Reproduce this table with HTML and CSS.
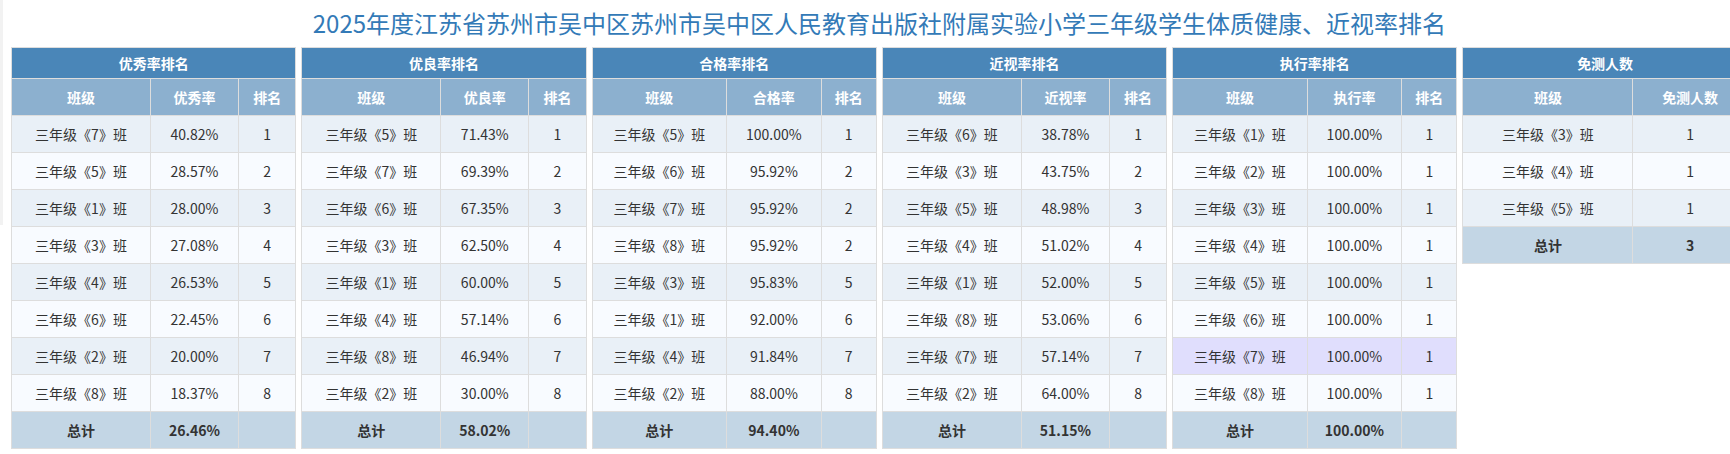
FILE: index.html
```html
<!DOCTYPE html>
<html lang="zh-CN">
<head>
<meta charset="utf-8">
<title>体质健康、近视率排名</title>
<link rel="stylesheet" href="styles.css">
</head>
<body>
<div class="edge"></div>
<div class="page">
  <h1 class="title">2025年度江苏省苏州市吴中区苏州市吴中区人民教育出版社附属实验小学三年级学生体质健康、近视率排名</h1>
  <div class="boards">
    <table class="rank">
      <colgroup><col class="a1"><col class="a2"><col></colgroup>
      <thead>
        <tr class="cap"><th colspan="3">优秀率排名</th></tr>
        <tr class="heads"><th>班级</th><th>优秀率</th><th>排名</th></tr>
      </thead>
      <tbody>
        <tr><td>三年级《7》班</td><td>40.82%</td><td>1</td></tr>
        <tr><td>三年级《5》班</td><td>28.57%</td><td>2</td></tr>
        <tr><td>三年级《1》班</td><td>28.00%</td><td>3</td></tr>
        <tr><td>三年级《3》班</td><td>27.08%</td><td>4</td></tr>
        <tr><td>三年级《4》班</td><td>26.53%</td><td>5</td></tr>
        <tr><td>三年级《6》班</td><td>22.45%</td><td>6</td></tr>
        <tr><td>三年级《2》班</td><td>20.00%</td><td>7</td></tr>
        <tr><td>三年级《8》班</td><td>18.37%</td><td>8</td></tr>
        <tr class="total"><td>总计</td><td>26.46%</td><td></td></tr>
      </tbody>
    </table>
    <table class="rank">
      <colgroup><col class="a1"><col class="a2"><col></colgroup>
      <thead>
        <tr class="cap"><th colspan="3">优良率排名</th></tr>
        <tr class="heads"><th>班级</th><th>优良率</th><th>排名</th></tr>
      </thead>
      <tbody>
        <tr><td>三年级《5》班</td><td>71.43%</td><td>1</td></tr>
        <tr><td>三年级《7》班</td><td>69.39%</td><td>2</td></tr>
        <tr><td>三年级《6》班</td><td>67.35%</td><td>3</td></tr>
        <tr><td>三年级《3》班</td><td>62.50%</td><td>4</td></tr>
        <tr><td>三年级《1》班</td><td>60.00%</td><td>5</td></tr>
        <tr><td>三年级《4》班</td><td>57.14%</td><td>6</td></tr>
        <tr><td>三年级《8》班</td><td>46.94%</td><td>7</td></tr>
        <tr><td>三年级《2》班</td><td>30.00%</td><td>8</td></tr>
        <tr class="total"><td>总计</td><td>58.02%</td><td></td></tr>
      </tbody>
    </table>
    <table class="rank">
      <colgroup><col class="b1"><col class="b2"><col></colgroup>
      <thead>
        <tr class="cap"><th colspan="3">合格率排名</th></tr>
        <tr class="heads"><th>班级</th><th>合格率</th><th>排名</th></tr>
      </thead>
      <tbody>
        <tr><td>三年级《5》班</td><td>100.00%</td><td>1</td></tr>
        <tr><td>三年级《6》班</td><td>95.92%</td><td>2</td></tr>
        <tr><td>三年级《7》班</td><td>95.92%</td><td>2</td></tr>
        <tr><td>三年级《8》班</td><td>95.92%</td><td>2</td></tr>
        <tr><td>三年级《3》班</td><td>95.83%</td><td>5</td></tr>
        <tr><td>三年级《1》班</td><td>92.00%</td><td>6</td></tr>
        <tr><td>三年级《4》班</td><td>91.84%</td><td>7</td></tr>
        <tr><td>三年级《2》班</td><td>88.00%</td><td>8</td></tr>
        <tr class="total"><td>总计</td><td>94.40%</td><td></td></tr>
      </tbody>
    </table>
    <table class="rank">
      <colgroup><col class="a1"><col class="a2"><col></colgroup>
      <thead>
        <tr class="cap"><th colspan="3">近视率排名</th></tr>
        <tr class="heads"><th>班级</th><th>近视率</th><th>排名</th></tr>
      </thead>
      <tbody>
        <tr><td>三年级《6》班</td><td>38.78%</td><td>1</td></tr>
        <tr><td>三年级《3》班</td><td>43.75%</td><td>2</td></tr>
        <tr><td>三年级《5》班</td><td>48.98%</td><td>3</td></tr>
        <tr><td>三年级《4》班</td><td>51.02%</td><td>4</td></tr>
        <tr><td>三年级《1》班</td><td>52.00%</td><td>5</td></tr>
        <tr><td>三年级《8》班</td><td>53.06%</td><td>6</td></tr>
        <tr><td>三年级《7》班</td><td>57.14%</td><td>7</td></tr>
        <tr><td>三年级《2》班</td><td>64.00%</td><td>8</td></tr>
        <tr class="total"><td>总计</td><td>51.15%</td><td></td></tr>
      </tbody>
    </table>
    <table class="rank">
      <colgroup><col class="b1"><col class="b2"><col></colgroup>
      <thead>
        <tr class="cap"><th colspan="3">执行率排名</th></tr>
        <tr class="heads"><th>班级</th><th>执行率</th><th>排名</th></tr>
      </thead>
      <tbody>
        <tr><td>三年级《1》班</td><td>100.00%</td><td>1</td></tr>
        <tr><td>三年级《2》班</td><td>100.00%</td><td>1</td></tr>
        <tr><td>三年级《3》班</td><td>100.00%</td><td>1</td></tr>
        <tr><td>三年级《4》班</td><td>100.00%</td><td>1</td></tr>
        <tr><td>三年级《5》班</td><td>100.00%</td><td>1</td></tr>
        <tr><td>三年级《6》班</td><td>100.00%</td><td>1</td></tr>
        <tr class="picked"><td>三年级《7》班</td><td>100.00%</td><td>1</td></tr>
        <tr><td>三年级《8》班</td><td>100.00%</td><td>1</td></tr>
        <tr class="total"><td>总计</td><td>100.00%</td><td></td></tr>
      </tbody>
    </table>
    <table class="rank">
      <colgroup><col class="c1"><col></colgroup>
      <thead>
        <tr class="cap"><th colspan="2">免测人数</th></tr>
        <tr class="heads"><th>班级</th><th>免测人数</th></tr>
      </thead>
      <tbody>
        <tr><td>三年级《3》班</td><td>1</td></tr>
        <tr><td>三年级《4》班</td><td>1</td></tr>
        <tr><td>三年级《5》班</td><td>1</td></tr>
        <tr class="total"><td>总计</td><td>3</td></tr>
      </tbody>
    </table>
  </div>
</div>
</body>
</html>
```

FILE: styles.css
```css
html {
  overflow: hidden;
}

body {
  margin: 0;
  background: #fff;
  font-family: "Microsoft YaHei", "Noto Sans CJK SC", sans-serif;
  color: #333;
}

.edge {
  position: absolute;
  left: 0;
  top: 0;
  width: 3px;
  height: 225px;
  background: #f2f2f2;
}

.page {
  width: max-content;
  padding-left: 11px;
}

.title {
  margin: 0 0 12px;
  padding-top: 11px;
  height: 24px;
  line-height: 24px;
  font-size: 24px;
  font-weight: normal;
  color: #337ab7;
  text-align: center;
}

.boards {
  display: flex;
  gap: 5px;
  align-items: flex-start;
}

.rank {
  flex: none;
  width: 285.3px;
  border-collapse: collapse;
  table-layout: fixed;
  border: 1px solid #ddd;
  font-size: 14px;
}

.rank th,
.rank td {
  border: 1px solid #ddd;
  padding: 0;
  text-align: center;
  white-space: nowrap;
}

.rank .cap th {
  height: 30px;
  background: #4a86b8;
  color: #fff;
  font-weight: bold;
}

.rank .heads th {
  height: 36px;
  background: #8cb0cf;
  color: #fff;
  font-weight: bold;
}

.rank td {
  height: 36px;
}

.rank tbody tr:nth-child(odd) td {
  background: #e9f0f7;
}

.rank tbody tr:nth-child(even) td {
  background: #f8fbff;
}

.rank tbody tr.picked td {
  background: #e0defd;
}

.rank tbody tr.total td {
  background: #c3d6e5;
  font-weight: bold;
}

.a1 { width: 139px; }
.a2 { width: 88px; }

.b1 { width: 134.5px; }
.b2 { width: 94.5px; }

.c1 { width: 170px; }
```
